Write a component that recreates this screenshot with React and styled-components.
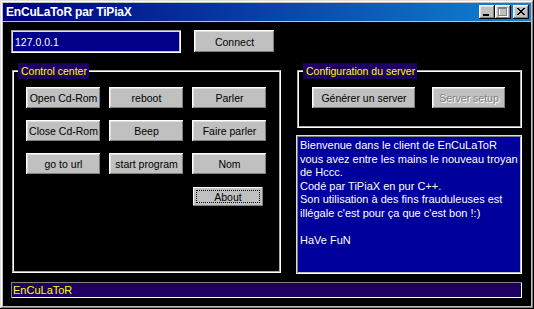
import React from 'react'
import styled, { createGlobalStyle } from 'styled-components'

const Global = createGlobalStyle`
	html, body {
		margin: 0;
		padding: 0;
		background: #000;
	}
	body {
		font-family: "Liberation Sans", Arial, sans-serif;
	}
`

const raised = `
	box-shadow: inset -1px -1px #000, inset 1px 1px #fff, inset -2px -2px #808080, inset 2px 2px #dfdfdf;
`
const sunken = `
	box-shadow: inset 1px 1px #808080, inset -1px -1px #fff, inset 2px 2px #404040, inset -2px -2px #c0c0c0;
`

const Window = styled.div`
	width: 534px;
	height: 309px;
	box-sizing: border-box;
	padding: 3px;
	background: #c0c0c0;
	display: flex;
	flex-direction: column;
	box-shadow: inset -1px -1px #000, inset 1px 1px #dfdfdf, inset -2px -2px #808080, inset 2px 2px #fff;
`

const TitleBar = styled.div`
	height: 18px;
	margin-bottom: 1px;
	display: flex;
	align-items: center;
	padding: 0 2px 0 3px;
	background: linear-gradient(90deg, #000080, #1084d0);
`

const Title = styled.span`
	flex: 1;
	color: #fff;
	font-weight: bold;
	font-size: 12px;
	letter-spacing: -0.2px;
`

const TitleButton = styled.button`
	width: 16px;
	height: 14px;
	padding: 0;
	border: none;
	margin-left: ${(p) => (p.$gap ? 2 : 0)}px;
	background: #c0c0c0;
	display: block;
	${raised}
	svg {
		display: block;
	}
`

const Client = styled.div`
	flex: 1;
	background: #000;
	padding: 8px 9px 0 8px;
	display: flex;
	flex-direction: column;
`

const TopRow = styled.div`
	display: flex;
	gap: 13px;
	height: 23px;
`

const Field = styled.input`
	width: 170px;
	height: 23px;
	box-sizing: border-box;
	border: none;
	outline: none;
	padding: 0 4px;
	background: #000088;
	color: #fff;
	font-family: inherit;
	font-size: 10.5px;
	box-shadow: inset 1px 1px #a0a0a0, inset -1px -1px #fff, inset 2px 2px #dfdfdf, inset -2px -2px #c0c0c0;
`

const Button = styled.button`
	width: ${(p) => p.$w || 75}px;
	height: ${(p) => p.$h || 22}px;
	padding: 0;
	border: none;
	background: #c0c0c0;
	color: #000;
	font-family: inherit;
	font-size: 10.5px;
	white-space: nowrap;
	${raised}
	&:disabled {
		color: #808080;
		text-shadow: 1px 1px #fff;
	}
`

const DefaultButton = styled(Button)`
	box-shadow: inset 0 0 0 1px #000, inset -2px -2px #808080, inset 2px 2px #fff;
	outline: 1px dotted #000;
	outline-offset: -5px;
`

const Main = styled.div`
	display: flex;
	gap: 15px;
	margin-top: 10px;
`

const Group = styled.fieldset`
	margin: 0 0 0 1px;
	padding: 0;
	min-width: 0;
	box-sizing: border-box;
	width: ${(p) => p.$w}px;
	height: ${(p) => p.$h}px;
	border: 2px groove #fff;
`

const Legend = styled.legend`
	margin-left: 4px;
	padding: 0 2px 0 3px;
	height: 16px;
	line-height: 16px;
	background: #1e0060;
	color: #ffff00;
	font-size: 10.5px;
`

const ControlGrid = styled.div`
	display: grid;
	grid-template-columns: repeat(3, 75px);
	grid-auto-rows: 22px;
	column-gap: 8px;
	row-gap: 11px;
	padding: 8px 0 0 12px;
`

const ServerRow = styled.div`
	display: flex;
	gap: 16px;
	padding: 8px 0 0 13px;
`

const Side = styled.div`
	width: 226px;
	display: flex;
	flex-direction: column;
	gap: 7px;
`

const Console = styled.div`
	height: 139px;
	box-sizing: border-box;
	padding: 4px 4px 0 4px;
	background: #00009c;
	color: #fff;
	font-size: 11px;
	line-height: 13.6px;
	white-space: pre-line;
	box-shadow: inset 1px 1px #dfdfdf, inset -1px -1px #fff, inset 2px 2px #808080, inset -2px -2px #c0c0c0;
`

const StatusBar = styled.div`
	margin-top: 8px;
	height: 16px;
	box-sizing: border-box;
	padding: 0 2px;
	background: #1e0060;
	color: #ffff00;
	font-size: 11px;
	line-height: 16px;
	${sunken}
	box-shadow: inset 1px 1px #808080, inset -1px -1px #fff;
`

const xPixels = [
	[0, 0], [1, 0], [6, 0], [7, 0],
	[1, 1], [2, 1], [5, 1], [6, 1],
	[2, 2], [3, 2], [4, 2], [5, 2],
	[3, 3], [4, 3],
	[2, 4], [3, 4], [4, 4], [5, 4],
	[1, 5], [2, 5], [5, 5], [6, 5],
	[0, 6], [1, 6], [6, 6], [7, 6],
]

const MinIcon = () => (
	<svg width='16' height='14' viewBox='0 0 16 14'>
		<rect x='4' y='9' width='6' height='2' fill='#000' />
	</svg>
)

const MaxIcon = () => (
	<svg width='16' height='14' viewBox='0 0 16 14' shapeRendering='crispEdges'>
		<g fill='none' stroke='#fff'>
			<rect x='4.5' y='3.5' width='8' height='8' />
		</g>
		<g fill='none' stroke='#808080'>
			<rect x='3.5' y='2.5' width='8' height='8' />
		</g>
		<rect x='3' y='2' width='9' height='2' fill='#808080' />
	</svg>
)

const CloseIcon = () => (
	<svg width='16' height='14' viewBox='0 0 16 14' shapeRendering='crispEdges'>
		{xPixels.map(([x, y]) => (
			<rect key={x + '-' + y} x={4 + x} y={3 + y} width='1' height='1' fill='#000' />
		))}
	</svg>
)

const message = `Bienvenue dans le client de EnCuLaToR
vous avez entre les mains le nouveau troyan
de Hccc.
Codé par TiPiaX en pur C++.
Son utilisation à des fins frauduleuses est
illégale c'est pour ça que c'est bon !:)

HaVe FuN`

const App = () => {
	return (
		<>
			<Global />
			<Window>
				<TitleBar>
					<Title>EnCuLaToR par TiPiaX</Title>
					<TitleButton><MinIcon /></TitleButton>
					<TitleButton><MaxIcon /></TitleButton>
					<TitleButton $gap><CloseIcon /></TitleButton>
				</TitleBar>
				<Client>
					<TopRow>
						<Field defaultValue='127.0.0.1' />
						<Button $w={81} $h={23}>Connect</Button>
					</TopRow>
					<Main>
						<Group $w={269} $h={210}>
							<Legend>Control center</Legend>
							<ControlGrid>
								<Button>Open Cd-Rom</Button>
								<Button>reboot</Button>
								<Button>Parler</Button>
								<Button>Close Cd-Rom</Button>
								<Button>Beep</Button>
								<Button>Faire parler</Button>
								<Button>go to url</Button>
								<Button>start program</Button>
								<Button>Nom</Button>
								<span />
								<span />
								<DefaultButton $w={72} $h={21}>About</DefaultButton>
							</ControlGrid>
						</Group>
						<Side>
							<Group $w={225} $h={65}>
								<Legend>Configuration du server</Legend>
								<ServerRow>
									<Button $w={104}>Générer un server</Button>
									<Button $w={74} disabled>Server setup</Button>
								</ServerRow>
							</Group>
							<Console>{message}</Console>
						</Side>
					</Main>
					<StatusBar>EnCuLaToR</StatusBar>
				</Client>
			</Window>
		</>
	)
}

export default App
